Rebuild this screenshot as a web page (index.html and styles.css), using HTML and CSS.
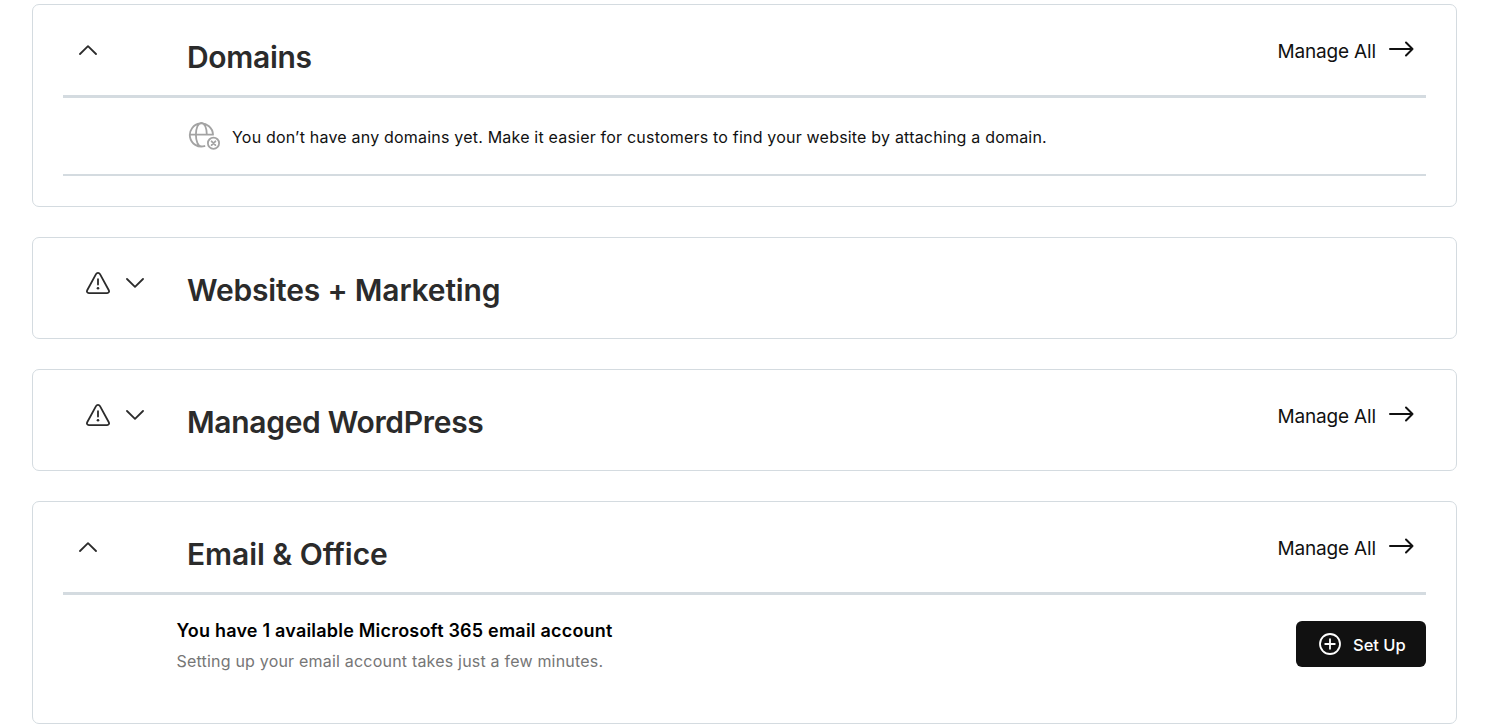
FILE: index.html
```html
<!DOCTYPE html>
<html lang="en">
<head>
    <meta charset="utf-8">
    <title>My Products</title>
    <link rel="stylesheet" href="styles.css">
</head>
<body>
    <main class="products">
        <section class="card">
            <div class="card-header with-line">
                <div class="toggle open">
                    <svg width="18" height="10" viewBox="0 0 18 10"><path d="M1 9 9 1.2 17 9"/></svg>
                </div>
                <h2 class="title domains">Domains</h2>
                <a class="manage">Manage All
                    <svg width="26" height="16" viewBox="0 0 26 16"><path d="M2 8h22.5M18 1.5 24.5 8 18 14.5"/></svg>
                </a>
            </div>
            <div class="empty">
                <svg class="globe" width="32" height="28" viewBox="0 0 32 28">
                    <path d="M25 12.6A11.6 11.6 0 1 0 16.5 24.2M1.9 12.6H25M18.8 12.6C18.8 6.5 16.9 1 13.4 1S7.9 6.5 7.9 12.6s2 11.9 5.5 11.9c1.2 0 2.2-.2 3-.5"/>
                    <circle cx="25.5" cy="21.2" r="5.6"/>
                    <path d="m23.6 19.3 3.8 3.8m0-3.8-3.8 3.8"/>
                </svg>
                <p class="empty-text">You don’t have any domains yet. Make it easier for customers to find your website by attaching a domain.</p>
            </div>
        </section>

        <section class="card">
            <div class="card-header">
                <div class="toggle">
                    <svg class="warning" width="26" height="24" viewBox="0 0 26 24"><path d="M11 3.1 2.2 19.2c-.8 1.4 0 2.9 1.7 2.9h18.2c1.7 0 2.5-1.5 1.7-2.9L15 3.1c-.9-1.6-3.1-1.6-4 0ZM13 8.2v5.4"/><circle cx="13" cy="17.3" r="1.3"/></svg>
                    <svg width="18" height="10" viewBox="0 0 18 10"><path d="M1 1l8 7.8L17 1"/></svg>
                </div>
                <h2 class="title websites">Websites + Marketing</h2>
            </div>
        </section>

        <section class="card">
            <div class="card-header">
                <div class="toggle">
                    <svg class="warning" width="26" height="24" viewBox="0 0 26 24"><path d="M11 3.1 2.2 19.2c-.8 1.4 0 2.9 1.7 2.9h18.2c1.7 0 2.5-1.5 1.7-2.9L15 3.1c-.9-1.6-3.1-1.6-4 0ZM13 8.2v5.4"/><circle cx="13" cy="17.3" r="1.3"/></svg>
                    <svg width="18" height="10" viewBox="0 0 18 10"><path d="M1 1l8 7.8L17 1"/></svg>
                </div>
                <h2 class="title wordpress">Managed WordPress</h2>
                <a class="manage">Manage All
                    <svg width="26" height="16" viewBox="0 0 26 16"><path d="M2 8h22.5M18 1.5 24.5 8 18 14.5"/></svg>
                </a>
            </div>
        </section>

        <section class="card">
            <div class="card-header with-line">
                <div class="toggle open">
                    <svg width="18" height="10" viewBox="0 0 18 10"><path d="M1 9 9 1.2 17 9"/></svg>
                </div>
                <h2 class="title email">Email &amp; Office</h2>
                <a class="manage">Manage All
                    <svg width="26" height="16" viewBox="0 0 26 16"><path d="M2 8h22.5M18 1.5 24.5 8 18 14.5"/></svg>
                </a>
            </div>
            <div class="account">
                <div>
                    <h3 class="account-title">You have 1 available Microsoft 365 email account</h3>
                    <p class="account-text">Setting up your email account takes just a few minutes.</p>
                </div>
                <button class="setup">
                    <svg width="22" height="22" viewBox="0 0 22 22"><circle cx="11" cy="11" r="10"/><path d="M11 6.2v9.6M6.2 11h9.6"/></svg>
                    <span>Set Up</span>
                </button>
            </div>
        </section>
    </main>
</body>
</html>
```
FILE: styles.css
```css
* {
    box-sizing: border-box;
}

body {
    margin: 0;
    background-color: #fff;
    color: #111;
    font-family: Inter, "Liberation Sans", sans-serif;
}

h2, h3, p {
    margin: 0;
}

svg {
    display: block;
    flex: none;
    fill: none;
    stroke: currentColor;
    stroke-width: 1.8;
    stroke-linecap: round;
    stroke-linejoin: round;
}

.products {
    display: flex;
    flex-direction: column;
    gap: 30px;
    width: 1425px;
    margin: 4px 0 0 32px;
}

.card {
    border: 1px solid #d4dbe0;
    border-radius: 7px;
    padding: 0 30px 30px;
}

.card-header {
    display: flex;
    align-items: flex-start;
    height: 70px;
}

.card-header.with-line {
    height: 93px;
    border-bottom: 3px solid #d4dbe0;
}

.toggle {
    display: flex;
    gap: 15px;
    width: 124px;
    padding: 33px 0 0 22px;
    color: #2b2b2b;
}

.toggle svg {
    margin-top: 7px;
}

.toggle .warning {
    margin-top: 0;
}

.warning circle {
    fill: currentColor;
    stroke: none;
}

.toggle.open {
    padding-left: 16px;
}

.title {
    padding-top: 34px;
    color: #2b2b2b;
    font-size: 30px;
    font-weight: 600;
    line-height: 36px;
    white-space: nowrap;
}

.domains {
    letter-spacing: -0.3px;
}

.websites {
    letter-spacing: -0.17px;
}

.wordpress {
    letter-spacing: -0.32px;
}

.email {
    letter-spacing: -0.05px;
}

.manage {
    display: flex;
    gap: 12px;
    margin-left: auto;
    padding: 35px 12px 0 0;
    font-size: 19px;
    letter-spacing: -0.15px;
    line-height: 24px;
}

.manage svg {
    margin-top: 1px;
    stroke-width: 2;
}

.empty {
    display: flex;
    gap: 12px;
    height: 78px;
    padding: 24px 0 0 125px;
    border-bottom: 2px solid #d4dbe0;
}

.globe {
    color: #a3a3a3;
}

.empty-text {
    padding-top: 3px;
    font-size: 16px;
    letter-spacing: 0.2px;
    line-height: 24px;
    white-space: nowrap;
}

.account {
    display: flex;
    justify-content: space-between;
    height: 98px;
    padding-left: 113.5px;
}

.account-title {
    padding-top: 23px;
    color: #000;
    font-size: 18px;
    font-weight: 600;
    letter-spacing: 0.21px;
    line-height: 26px;
}

.account-text {
    padding-top: 5px;
    color: #767676;
    font-size: 16px;
    letter-spacing: 0.2px;
    line-height: 24px;
}

.setup {
    display: flex;
    align-items: center;
    gap: 12px;
    width: 130px;
    height: 46px;
    margin-top: 26px;
    padding: 0 0 0 23px;
    border: none;
    border-radius: 6px;
    background-color: #111;
    color: #fff;
    font-family: inherit;
    font-size: 16.5px;
    font-weight: 500;
}

.setup span {
    padding-top: 2px;
}
```
